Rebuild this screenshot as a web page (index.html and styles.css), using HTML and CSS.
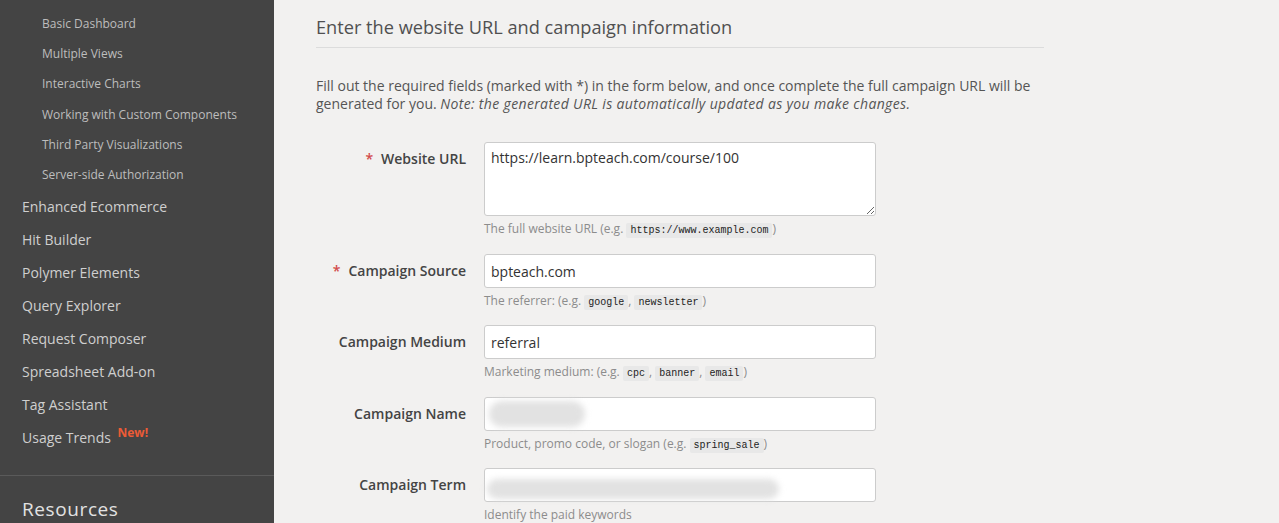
FILE: index.html
```html
<!DOCTYPE html>
<html lang="en">
<head>
<meta charset="utf-8">
<title>Campaign URL Builder</title>
<link rel="stylesheet" href="styles.css">
</head>
<body>
<div class="page">
  <nav class="sidebar">
    <ul class="sub-list">
      <li>Basic Dashboard</li>
      <li>Multiple Views</li>
      <li>Interactive Charts</li>
      <li>Working with Custom Components</li>
      <li>Third Party Visualizations</li>
      <li>Server-side Authorization</li>
    </ul>
    <ul class="top-list">
      <li>Enhanced Ecommerce</li>
      <li>Hit Builder</li>
      <li>Polymer Elements</li>
      <li>Query Explorer</li>
      <li>Request Composer</li>
      <li>Spreadsheet Add-on</li>
      <li>Tag Assistant</li>
      <li>Usage Trends <span class="new">New!</span></li>
    </ul>
    <div class="resources">Resources</div>
  </nav>
  <main class="main">
    <section class="section">
      <h2 class="heading">Enter the website URL and campaign information</h2>
      <p class="intro">Fill out the required fields (marked with *) in the form below, and once complete the full campaign URL will be generated for you. <em>Note: the generated URL is automatically updated as you make changes.</em></p>
      <div class="form">
        <div class="row row-wide">
          <label class="label"><span class="req">*</span>Website URL</label>
          <div class="control">
            <textarea class="textarea">https://learn.bpteach.com/course/100</textarea>
            <div class="help">The full website URL (e.g. <code>https://www.example.com</code>)</div>
          </div>
        </div>
        <div class="row">
          <label class="label"><span class="req">*</span>Campaign Source</label>
          <div class="control">
            <input class="input" type="text" value="bpteach.com">
            <div class="help">The referrer: (e.g. <code>google</code>, <code>newsletter</code>)</div>
          </div>
        </div>
        <div class="row row-wide">
          <label class="label">Campaign Medium</label>
          <div class="control">
            <input class="input" type="text" value="referral">
            <div class="help">Marketing medium: (e.g. <code>cpc</code>, <code>banner</code>, <code>email</code>)</div>
          </div>
        </div>
        <div class="row">
          <label class="label">Campaign Name</label>
          <div class="control">
            <div class="input fake"><span class="blob blob-name"></span></div>
            <div class="help">Product, promo code, or slogan (e.g. <code>spring_sale</code>)</div>
          </div>
        </div>
        <div class="row">
          <label class="label">Campaign Term</label>
          <div class="control">
            <div class="input fake"><span class="blob blob-term"></span></div>
            <div class="help">Identify the paid keywords</div>
          </div>
        </div>
      </div>
    </section>
  </main>
</div>
</body>
</html>
```
FILE: styles.css
```css
* { box-sizing: border-box; }
html, body { margin: 0; padding: 0; }
body {
  font-family: "Open Sans", "Liberation Sans", sans-serif;
  background: #f2f1f0;
  height: 523px;
  overflow: hidden;
}
.page {
  display: flex;
  height: 523px;
}
.sidebar {
  width: 274px;
  flex: none;
  background: #444444;
  height: 523px;
  overflow: hidden;
}
.sub-list, .top-list {
  list-style: none;
  margin: 0;
  padding: 0;
}
.sub-list {
  padding: 9px 0 0 42px;
}
.sub-list li {
  font-size: 12px;
  line-height: 30.2px;
  color: #bdbdbd;
  white-space: nowrap;
}
.top-list {
  padding: 0 0 0 22px;
}
.top-list li {
  font-size: 14px;
  line-height: 33px;
  height: 33px;
  color: #cfcfcf;
}
.new {
  color: #ec5b36;
  font-weight: 700;
  font-size: 12px;
  line-height: 12px;
  margin-left: 3px;
  position: relative;
  top: -6px;
}
.resources {
  margin-top: 21px;
  border-top: 1px solid #5a5a5a;
  padding: 21px 0 0 22px;
  font-size: 19px;
  line-height: 24px;
  letter-spacing: 0.6px;
  color: #e2e2e2;
}
.main {
  flex: 1;
  padding: 14px 0 0 42px;
}
.section {
  width: 728px;
}
.heading {
  margin: 0;
  font-size: 18.2px;
  font-weight: 400;
  line-height: 26px;
  color: #505050;
  padding-bottom: 7px;
  border-bottom: 1px solid #dcdcdc;
}
.intro {
  margin: 29px 0 0 0;
  font-size: 14px;
  line-height: 18px;
  color: #555555;
}
.intro em {
  letter-spacing: 0.35px;
}
.form {
  margin-top: 29px;
}
.row {
  display: flex;
  gap: 18px;
  margin-bottom: 16px;
}
.row-wide {
  margin-bottom: 17px;
}
.label {
  width: 150px;
  flex: none;
  text-align: right;
  font-size: 14px;
  font-weight: 600;
  line-height: 34px;
  color: #444444;
}
.req {
  color: #d24b4b;
  margin-right: 8px;
}
.control {
  width: 392px;
}
.input, .textarea {
  display: block;
  width: 392px;
  border: 1px solid #cccccc;
  border-radius: 3px;
  background: #ffffff;
  font-family: "Open Sans", "Liberation Sans", sans-serif;
  font-size: 14px;
  color: #333333;
  padding: 0 6px;
  margin: 0;
  outline: none;
}
.input {
  height: 34px;
  line-height: 32px;
}
.textarea {
  height: 74px;
  line-height: 20px;
  padding-top: 5px;
  resize: vertical;
}
.fake {
  display: flex;
  align-items: center;
  overflow: visible;
}
.blob {
  display: block;
  background: #e2e2e2;
  filter: blur(3px);
  border-radius: 14px;
}
.blob-name {
  margin-left: -2px;
  width: 96px;
  height: 26px;
}
.blob-term {
  margin-left: -4px;
  width: 292px;
  height: 20px;
  margin-top: 7px;
}
.help {
  margin-top: 5px;
  font-size: 12px;
  line-height: 16px;
  height: 16px;
  color: #8c8c8c;
}
code {
  font-family: "Liberation Mono", "DejaVu Sans Mono", monospace;
  font-size: 10px;
  line-height: 10px;
  color: #222222;
  background: #e8e8e8;
  padding: 2px 4px;
  border-radius: 2px;
}
```
